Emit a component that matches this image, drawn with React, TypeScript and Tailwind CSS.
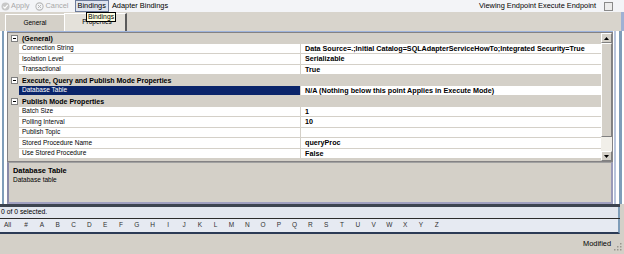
import React from "react";

const font = { fontFamily: '"Liberation Sans", Arial, sans-serif' };

function Minus() {
  return (
    <div className="w-[7px] h-[7px] border border-[#808080] bg-white flex items-center justify-center">
      <div className="w-[3px] h-[1px] bg-black" />
    </div>
  );
}

type Row =
  | { kind: "cat"; name: string }
  | { kind: "prop"; name: string; value: string; selected?: boolean };

const rows: Row[] = [
  { kind: "cat", name: "(General)" },
  {
    kind: "prop",
    name: "Connection String",
    value: "Data Source=.;Initial Catalog=SQLAdapterServiceHowTo;Integrated Security=True",
  },
  { kind: "prop", name: "Isolation Level", value: "Serializable" },
  { kind: "prop", name: "Transactional", value: "True" },
  { kind: "cat", name: "Execute, Query and Publish Mode Properties" },
  {
    kind: "prop",
    name: "Database Table",
    value: "N/A (Nothing below this point Applies in Execute Mode)",
    selected: true,
  },
  { kind: "cat", name: "Publish Mode Properties" },
  { kind: "prop", name: "Batch Size", value: "1" },
  { kind: "prop", name: "Polling Interval", value: "10" },
  { kind: "prop", name: "Publish Topic", value: "" },
  { kind: "prop", name: "Stored Procedure Name", value: "queryProc" },
  { kind: "prop", name: "Use Stored Procedure", value: "False" },
  { kind: "cat", name: "Subscribe Mode Properties" },
];

const letters = ["#", "A", "B", "C", "D", "E", "F", "G", "H", "I", "J", "K", "L", "M", "N", "O", "P", "Q", "R", "S", "T", "U", "V", "W", "X", "Y", "Z"];

export default function App() {
  return (
    <div className="w-[624px] h-[254px] overflow-hidden flex flex-col bg-[#d4d0c8] text-[6.5px] text-black leading-none" style={font}>
      {/* toolbar */}
      <div className="h-[12px] flex items-center bg-[#f3f4f7] relative text-[7.4px]">
        <div className="flex items-center gap-[1px] pl-[1px] text-[#a8a8a8]">
          <svg width="9" height="9" viewBox="0 0 9 9">
            <circle cx="4.5" cy="4.5" r="4" fill="#c8c8c8" />
            <path d="M2.3 4.6 L3.9 6.1 L6.7 2.9" stroke="#fff" strokeWidth="1.2" fill="none" />
          </svg>
          <span>Apply</span>
        </div>
        <div className="flex items-center gap-[2px] ml-[5px] text-[#a8a8a8]">
          <svg width="9" height="9" viewBox="0 0 9 9">
            <circle cx="4.5" cy="4.5" r="3.6" fill="none" stroke="#b8b8b8" strokeWidth="1.1" />
            <path d="M3 3 L6 6 M6 3 L3 6" stroke="#b8b8b8" strokeWidth="1" />
          </svg>
          <span>Cancel</span>
        </div>
        <div className="ml-[6px] h-[12px] px-[2px] flex items-center border border-[#6d7c9c] bg-[#dfe4ee]">Bindings</div>
        <div className="ml-[3px]">Adapter Bindings</div>
        <div className="ml-auto mr-[8px]">Viewing Endpoint Execute Endpoint</div>
        <div className="w-[9px] h-[9px] border border-[#8a8a8a] bg-[#ececec] mr-[11px]" />
        {/* tooltip */}
        <div className="absolute left-[86px] top-[12px] h-[10px] px-[1px] flex items-center bg-[#ffffe1] border border-black z-10 text-[6.8px]">Bindings</div>
      </div>

      {/* tab strip */}
      <div className="h-[19px] flex items-end bg-[#d8d4cc] pl-[5px] border-r-[3px] border-[#9fb1d4]">
        <div className="w-[59px] h-[17px] flex items-center justify-center bg-[#d4d0c8] border-t border-l border-white">General</div>
        <div className="w-[63px] h-[18px] flex items-center justify-center bg-[#e4e1da] border-t border-l border-white border-r-2 border-r-[#5a5a5a] pl-[4px]">Properties</div>
      </div>

      {/* grid + description */}
      <div className="h-[173px] flex bg-white">
        <div className="w-[7px] flex">
          <div className="w-[2px] ml-[2px] bg-[#7f9db9]" />
        </div>
        <div className="w-[606px] flex flex-col border-t border-[#9db3dc]">
          <div className="h-[130px] flex border border-[#848284] overflow-hidden">
            <div className="flex-1 flex flex-col overflow-hidden">
              {rows.map((r, i) =>
                r.kind === "cat" ? (
                  <div key={i} className="h-[10.5px] shrink-0 flex items-center bg-[#d4d0c8] font-bold text-[7px] whitespace-nowrap">
                    <div className="w-[12px] flex justify-center pl-[1px]">
                      <Minus />
                    </div>
                    <span className="pl-[2px]">{r.name}</span>
                  </div>
                ) : (
                  <div key={i} className="h-[10.5px] shrink-0 flex bg-[#d4d0c8]">
                    <div className="w-[11px]" />
                    <div
                      className={
                        "w-[281px] flex items-center pl-[3px] border-b border-[#d4d0c8] " +
                        (r.selected ? "bg-[#0a246a] text-white" : "bg-white")
                      }
                    >
                      {r.name}
                    </div>
                    <div className="flex-1 flex items-center pl-[4px] bg-white font-bold text-[7.2px] whitespace-nowrap border-l border-b border-[#d4d0c8]">
                      {r.value}
                    </div>
                  </div>
                )
              )}
            </div>
            {/* scrollbar */}
            <div className="w-[11px] flex flex-col bg-[#f1efe9]">
              <div className="h-[10px] flex items-center justify-center bg-[#d4d0c8] border-t border-l border-white border-b border-r border-b-[#808080] border-r-[#808080]">
                <svg width="5" height="3" viewBox="0 0 5 3">
                  <path d="M0 3 L2.5 0 L5 3 Z" fill="#000" />
                </svg>
              </div>
              <div className="h-[94px] bg-[#d4d0c8] border-t border-l border-white border-b border-r border-b-[#808080] border-r-[#808080]" />
              <div className="flex-1" />
              <div className="h-[10px] flex items-center justify-center bg-[#d4d0c8] border-t border-l border-white border-b border-r border-b-[#808080] border-r-[#808080]">
                <svg width="5" height="3" viewBox="0 0 5 3">
                  <path d="M0 0 L2.5 3 L5 0 Z" fill="#000" />
                </svg>
              </div>
            </div>
          </div>
          {/* description */}
          <div className="h-[42px] flex flex-col bg-[#d4d0c8] border-t border-[#a0a0a0] border-l-2 border-l-[#8a8aa8] border-r-2 border-r-[#9a9ab8] border-b-2 border-b-[#a0a0c0] pl-[4px] pt-[4px]">
            <div className="font-bold text-[7.4px]">Database Table</div>
            <div className="mt-[3px]">Database table</div>
          </div>
        </div>
        <div className="w-[11px] flex">
          <div className="w-[2px] ml-[1px] bg-[#b8c4dc]" />
          <div className="w-[3px] ml-[3px] bg-[#7f9db9]" />
        </div>
      </div>

      {/* dark separator */}
      <div className="h-[3px] bg-[#3d4450] mr-[4px]" />
      {/* status */}
      <div className="h-[11px] flex items-center pl-[1px] bg-[#e3e7ef] mr-[4px] border-r-2 border-[#7f9db9] text-[6.8px]">0 of 0 selected.</div>
      <div className="h-[1px] bg-[#2c2c2c] mr-[4px]" />
      {/* alphabet */}
      <div className="h-[15px] flex items-center bg-[#e6eaf2] mr-[4px] border-b-2 border-[#2b3a55] border-r-2 border-r-[#7f9db9] text-[#303030]">
        <div className="w-[18px] pl-[4px] text-[#303030]">All</div>
        {letters.map((l, i) => (
          <div key={l} className={(i === 0 ? "w-[16px]" : "w-[15.8px]") + " text-center shrink-0"}>
            {l}
          </div>
        ))}
      </div>
      {/* bottom */}
      <div className="flex-1 flex items-center justify-end bg-[#d4d0c8]">
        <span className="text-[7.4px]">Modified</span>
        <svg width="10" height="10" viewBox="0 0 10 10" className="ml-[2px] mr-[1px] self-end mb-[2px]">
          <g fill="#9a968e">
            <rect x="7" y="1" width="1.5" height="1.5" />
            <rect x="4" y="4" width="1.5" height="1.5" />
            <rect x="7" y="4" width="1.5" height="1.5" />
            <rect x="1" y="7" width="1.5" height="1.5" />
            <rect x="4" y="7" width="1.5" height="1.5" />
            <rect x="7" y="7" width="1.5" height="1.5" />
          </g>
        </svg>
      </div>
    </div>
  );
}
